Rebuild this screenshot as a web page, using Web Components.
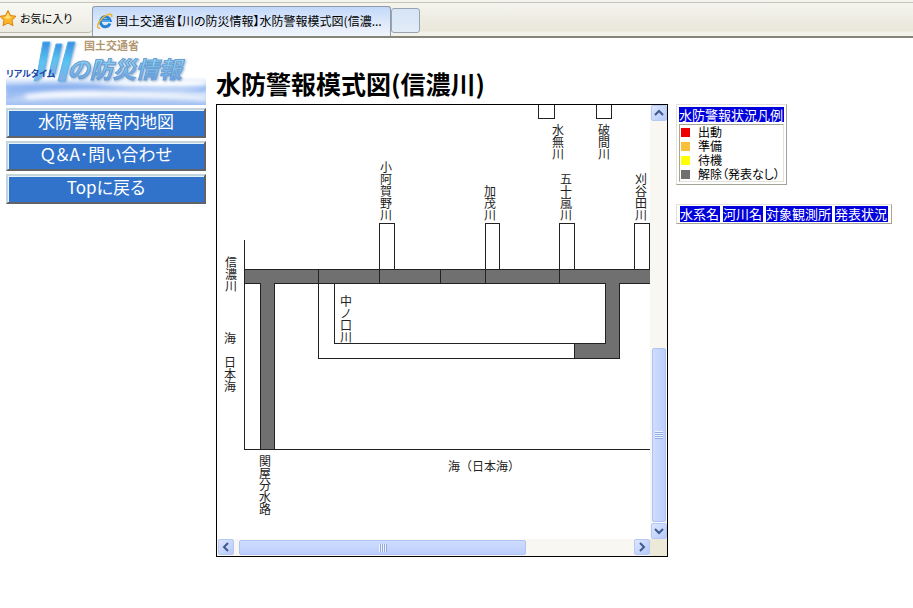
<!DOCTYPE html>
<html lang="ja">
<head>
<meta charset="utf-8">
<title>水防警報模式図(信濃川)</title>
<style>
body { margin: 0; background: #fff; color: #000; font-family: "Noto Sans CJK JP", "Liberation Sans", sans-serif; font-size: 12px; font-feature-settings: "palt"; }
</style>
</head>
<body>
<flood-page></flood-page>
<script>
const define = (name, html, init) => customElements.define(name, class extends HTMLElement {
  connectedCallback() {
    if (this.shadowRoot) return;
    this.attachShadow({ mode: 'open' }).innerHTML = html;
    if (init) init(this, this.shadowRoot);
  }
});

define('browser-tabs', `
<style>
:host { display: flex; height: 38px; box-sizing: border-box; border-bottom: 2px solid #858478; background: linear-gradient(#f4f4ef 0, #f4f4ef 2px, #c4c3b8 2px, #c4c3b8 3px, #f5f4ee 3px, #e9e7d9 31px, #f2f1ea 32px); line-height: 16px; }
button { font: inherit; color: inherit; font-feature-settings: inherit; margin: 0; padding: 0; display: flex; align-items: center; white-space: nowrap; text-align: left; }
svg { flex: none; }
.fav { width: 92px; gap: 3px; border: 0; background: linear-gradient(#f8f8f4, #ecebe2); height: 30px; margin-top: 3px; border-bottom: 1px solid #bbb9ad; border-bottom-right-radius: 4px; font-size: 11px; }
.tab { width: 299px; margin-top: 6px; padding: 0 4px; gap: 3px; border: 1px solid #8f9ba9; border-bottom: 0; border-radius: 3px 3px 0 0; background: linear-gradient(#c2d8fa, #dce8fa 50%, #f1f5fb); box-sizing: border-box; padding-bottom: 2px; }
.tab span { overflow: hidden; }
.new { width: 29px; height: 25px; margin-top: 8px; border: 1px solid #98a3b0; border-radius: 3px; background: linear-gradient(#d6e4f6, #e2ecf8); }
</style>
<button class="fav"><svg width="17" height="18" viewBox="0 0 17 18"><path d="M8 1.500 10.500 6.500 16 7.300 12 11.200 13 16.700 8 14 3 16.700 4 11.200 0 7.300 5.500 6.500Z" fill="#fdb52c" stroke="#d98212"/><path d="M8 4 9.500 7.500 12 8 8 10 4 9 6 7.500Z" fill="#ffe27a"/></svg><span>お気に入り</span></button>
<button class="tab"><svg width="16" height="16" viewBox="0 0 16 16"><path d="M13 10.500A5 5 0 1 1 13.200 7.500H4" fill="none" stroke="#2a83d2" stroke-width="3"/><path d="M4.500 8H13" stroke="#58b2ee" stroke-width="1.500"/><path d="M3 15C-2 16 1 9 6 4.500 11 .5 16 .2 14.500 4" fill="none" stroke="#f0b52e" stroke-width="1.600"/></svg><span>国土交通省【川の防災情報】水防警報模式図(信濃...</span></button>
<button class="new" aria-label="新しいタブ"></button>`);

define('site-logo', `
<style>:host { display: block; } svg { display: block; width: 100%; height: auto; }</style>
<svg viewBox="0 0 200 66" role="img" aria-label="リアルタイム 川の防災情報">
<defs>
<linearGradient id="sea" x1="0" y1="0" x2="0" y2="1"><stop offset="0" stop-color="#fff"/><stop offset=".35" stop-color="#a5c4f4"/><stop offset=".6" stop-color="#cfe0fa"/><stop offset="1" stop-color="#a3c0f1"/></linearGradient>
<linearGradient id="ink" x1="0" y1="0" x2="0" y2="1"><stop offset="0" stop-color="#3d8ee2"/><stop offset=".5" stop-color="#58c4f0"/><stop offset="1" stop-color="#86aee6"/></linearGradient>
<linearGradient id="word" x1="0" y1="0" x2="0" y2="1"><stop offset=".2" stop-color="#8ed6f2"/><stop offset=".9" stop-color="#6c9ee0"/></linearGradient>
<filter id="soft" x="-10%" y="-30%" width="120%" height="160%"><feGaussianBlur stdDeviation="2"/></filter>
<filter id="shade"><feDropShadow dx="1" dy="1" stdDeviation="1" flood-color="#5f86b8" flood-opacity=".6"/></filter>
</defs>
<rect y="38" width="200" height="28" fill="url(#sea)"/>
<g filter="url(#soft)"><path d="M0 48Q60 40 120 50T200 46V52Q150 58 100 53T0 60Z" fill="#7da9ee" opacity=".65"/><path d="M20 56Q90 48 200 58V61Q100 54 20 60Z" fill="#fff"/><path d="M90 44Q150 38 200 42V46Q150 50 90 44Z" fill="#fff"/></g>
<g font-weight="bold" fill="url(#ink)" filter="url(#shade)">
<g stroke="#58b5ec" stroke-linejoin="round"><path d="M37 3H44L38 33Q35 41 28 42L32 32Z"/><path d="M50 5H56L49 35H43Z"/><path d="M62 3H69L59 42H52Z"/></g>
<text x="61" y="39" font-size="23" font-style="italic" fill="url(#word)" stroke="#6a9fd4" stroke-width="1">の防災情報</text></g>
<text x="78" y="11" font-size="11" font-weight="bold" fill="#b39772">国土交通省</text>
<text x="0" y="38" font-size="9" font-weight="bold" fill="#1648a8">リアルタイム</text>
</svg>`);

define('nav-button', `
<style>
:host { display: block; }
a { display: block; height: 30px; box-sizing: border-box; border: 2px solid; border-color: #c4d4dc #606468 #606468 #c4d4dc; background: #3173cb; box-shadow: inset 1px 1px #e6f4fa; color: #fff; text-decoration: none; text-align: center; font-size: 17px; line-height: 22px; }
</style><a href="#"><slot></slot></a>`);

define('river-label', `
<style>
:host { position: absolute; width: 12px; font-size: 12px; line-height: 12px; color: #222; word-break: break-all; font-feature-settings: normal; }
:host([flat]) { width: auto; white-space: nowrap; }
</style><slot></slot>`, el => {
  el.style.left = el.getAttribute('x') + 'px';
  el.style.top = el.getAttribute('y') + 'px';
});

define('scroll-bar', `
<style>
:host { display: flex; background: #f8f7f2; --len: 287px; padding: 0 0 0 1px; }
:host([vertical]) { flex-direction: column; --len: 174px; padding: 0 0 0 1px; }
button { flex: none; width: 16px; height: 16px; margin: 0; padding: 0; border: 1px solid #b5c8f6; border-radius: 2px; background: linear-gradient(135deg, #dce6fe, #b5c9fa); display: grid; place-items: center; }
.track { flex: 1; display: flex; min-width: 0; min-height: 0; padding: 0 5px; }
:host([vertical]) .track { flex-direction: column; justify-content: flex-end; padding: 1px 1px; }
.thumb { flex: 0 1 var(--len); box-sizing: border-box; border: 1px solid #b0c4f4; border-radius: 2px; background: linear-gradient(#cfdcff, #bccefb); display: grid; place-items: center; margin: 1px 0; }
:host([vertical]) .thumb { background: linear-gradient(90deg, #cfdcff, #bccefb); margin: 0; }
i { width: 8px; height: 8px; background: repeating-linear-gradient(90deg, #eef4ff 0 1px, #93acdf 1px 2px); }
:host([vertical]) i { background: repeating-linear-gradient(#eef4ff 0 1px, #93acdf 1px 2px); }
svg { fill: none; stroke: #40598c; stroke-width: 2; }
</style>
<button class="a"><svg width="10" height="10"><path/></svg></button>
<div class="track"><div class="thumb"><i></i></div></div>
<button class="b"><svg width="10" height="10"><path/></svg></button>`, (el, root) => {
  const v = el.hasAttribute('vertical');
  const [a, b] = root.querySelectorAll('path');
  a.setAttribute('d', v ? 'M1 7 5 3 9 7' : 'M7 1 3 5 7 9');
  b.setAttribute('d', v ? 'M1 3 5 7 9 3' : 'M3 1 7 5 3 9');
  root.querySelector('.a').setAttribute('aria-label', v ? '上へ' : '左へ');
  root.querySelector('.b').setAttribute('aria-label', v ? '下へ' : '右へ');
});

define('river-diagram', `
<style>
:host { display: grid; grid-template-columns: minmax(0, 1fr) 17px; grid-template-rows: auto 17px; border: 1px solid #000; }
.view { overflow: hidden; }
.canvas { position: relative; width: 433px; height: 434px; }
svg { display: block; }
.corner { background: #ece9d8; }
</style>
<div class="view"><div class="canvas">
<svg width="433" height="434" viewBox="217 105 433 434" shape-rendering="crispEdges">
<g fill="#707070"><path d="M244 269H650V284H244Z"/><path d="M260 284H275V449H260Z"/><path d="M605 284H620V359H574V343H605Z"/></g>
<g fill="none" stroke="#222" transform="translate(.5 .5)">
<path d="M244 239V449H650M244 269H650M244 283H260V449M274 449V283H605V343H334V283M650 283H619V358H318V269M379 283V223H394V269M440 269V283M485 283V223H499V269M559 283V223H574V269M634 269V223H649V269M574 343V358M538 104V118H554V104M596 104V118H611V104"/>
</g></svg>
<river-label x="335" y="19">水無川</river-label>
<river-label x="381" y="19">破間川</river-label>
<river-label x="163" y="56">小阿賀野川</river-label>
<river-label x="267" y="80">加茂川</river-label>
<river-label x="343" y="68">五十嵐川</river-label>
<river-label x="418" y="68">刈谷田川</river-label>
<river-label x="8" y="151">信濃川</river-label>
<river-label x="7" y="227">海</river-label>
<river-label x="7" y="251">日本海</river-label>
<river-label x="123" y="190">中ノ口川</river-label>
<river-label x="42" y="350">関屋分水路</river-label>
<river-label flat x="231" y="355">海（日本海）</river-label>
</div></div>
<scroll-bar vertical></scroll-bar><scroll-bar></scroll-bar><div class="corner"></div>`);

const tableCss = `
:host { display: block; }
table { border: 1px solid; border-color: #e4e2d6 #a5a396 #a5a396 #e4e2d6; border-collapse: separate; font-size: 13px; line-height: 14px; white-space: nowrap; }
th { background: #0000dc; color: #fff; font-weight: normal; text-align: left; padding: 0 1px 0 0; height: 16px; line-height: 16px; }`;

define('status-legend', `
<style>${tableCss}
table { border-spacing: 2px; }
th { height: 15px; line-height: 15px; }
td { padding: 0 1px; border: 1px solid; border-color: #a5a396 #e4e2d6 #e4e2d6 #a5a396; }
ul { list-style: none; margin: 0; padding: 0; font-size: 12px; }
li { display: flex; align-items: center; gap: 8px; height: 14px; }
li::before { content: ""; width: 9px; height: 9px; background: var(--c); }
</style>
<table><thead><tr><th scope="col">水防警報状況凡例</th></tr></thead><tbody><tr><td><ul>
<li style="--c:#ee0000">出動</li><li style="--c:#f9c03c">準備</li><li style="--c:#ffff00">待機</li><li style="--c:#707070">解除（発表なし）</li>
</ul></td></tr></tbody></table>`);

define('status-table', `
<style>${tableCss} table { border-spacing: 3px 1px; }</style>
<table><thead><tr><th scope="col">水系名</th><th scope="col">河川名</th><th scope="col">対象観測所</th><th scope="col">発表状況</th></tr></thead></table>`);

define('flood-page', `
<style>
:host { display: block; }
.cols { display: grid; grid-template-columns: 200px minmax(0, 452px) auto; justify-content: start; padding: 1px 6px 0; }
nav { display: grid; align-content: start; row-gap: 3px; }
main { margin-left: 10px; width: 100%; padding-top: 27px; }
h1 { margin: 0 0 4px; font-size: 25px; line-height: 34px; white-space: nowrap; }
aside { display: grid; align-content: start; gap: 19px; margin-left: 18px; padding-top: 65px; }
</style>
<browser-tabs></browser-tabs>
<div class="cols">
<nav><site-logo></site-logo><nav-button>水防警報管内地図</nav-button><nav-button>Ｑ＆A･問い合わせ</nav-button><nav-button>Topに戻る</nav-button></nav>
<main><h1>水防警報模式図(信濃川)</h1><river-diagram></river-diagram></main>
<aside><status-legend></status-legend><status-table></status-table></aside>
</div>`);
</script>
</body>
</html>
